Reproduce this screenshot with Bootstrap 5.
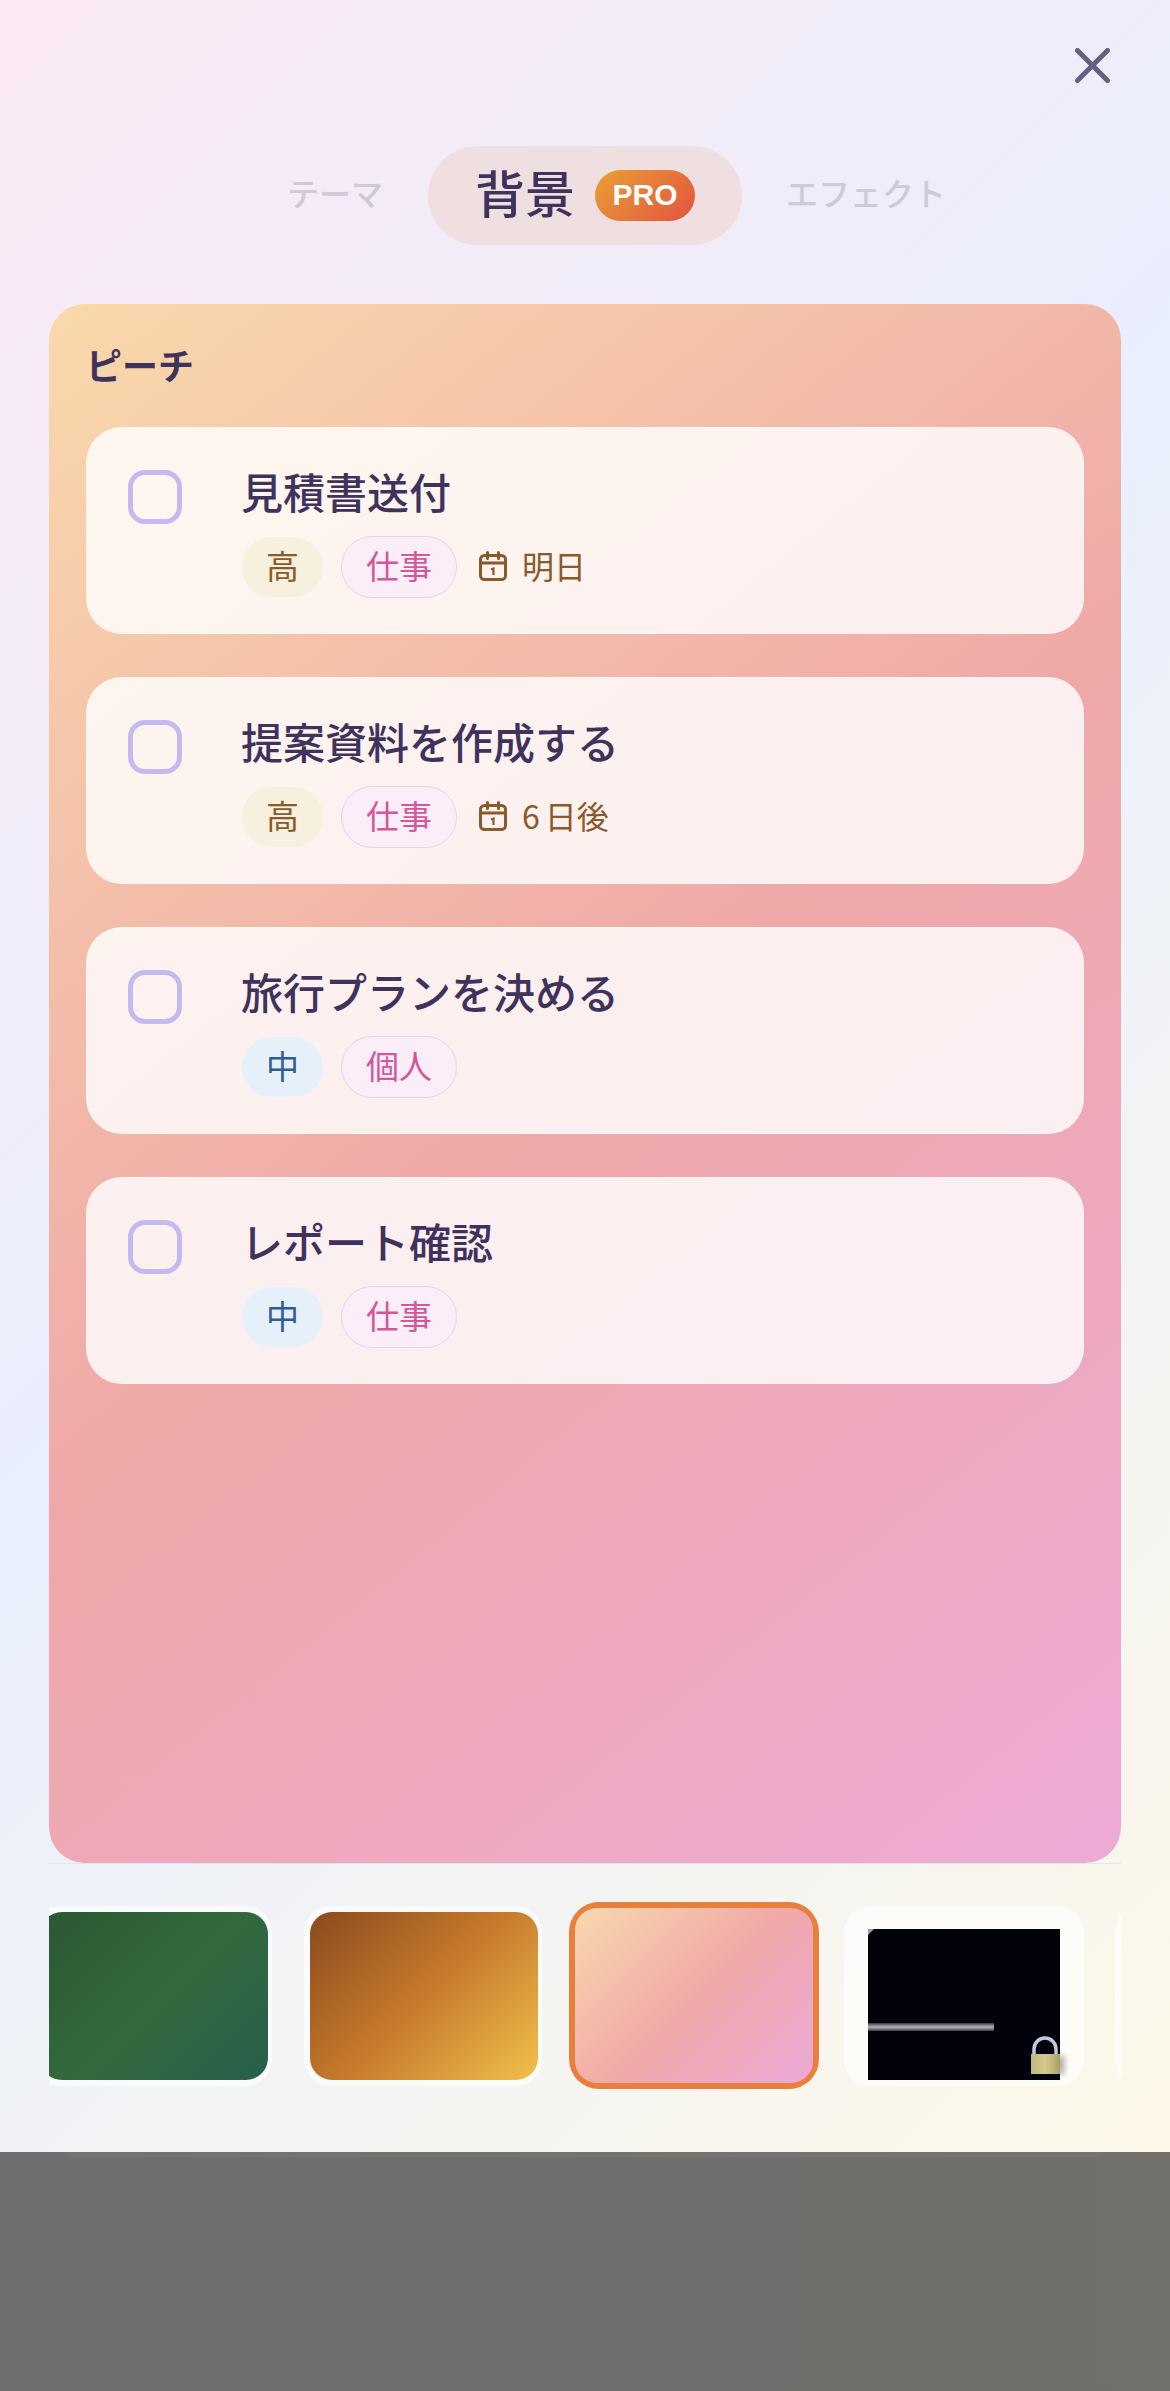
<!DOCTYPE html>
<html lang="ja">
<head>
    <meta charset="UTF-8">
    <meta name="viewport" content="width=device-width, initial-scale=1.0">
    <title>背景</title>
    <link href="https://cdn.jsdelivr.net/npm/bootstrap@5.3.0/dist/css/bootstrap.min.css" rel="stylesheet">
    <style>
        body {
            width: 1170px;
            height: 2391px;
            overflow: hidden;
            font-family: "Noto Sans CJK JP", "Liberation Sans", sans-serif;
            color: #3f325c;
            background: #6f6f6e;
        }
        .sheet {
            height: 2152px;
            background: linear-gradient(135deg, #fbe9f4 0%, #e9effd 47%, #fdf8e8 100%);
        }
        .dim-area {
            height: 239px;
            background: linear-gradient(90deg, #6e6e71, #71706b);
        }
        .dim-edge {
            height: 5px;
            margin: 0 66px;
            border-radius: 0 0 16px 16px;
            background: rgba(255, 255, 255, .03);
        }
        .close-row {
            padding: 48px 60px 0 0;
        }
        .tab-row {
            margin-top: 63px;
            height: 99px;
            padding-left: 287px;
        }
        .tab-off {
            font-size: 32px;
            font-weight: 500;
            color: #cfc9da;
            line-height: 1;
            padding-bottom: 8px;
        }
        .tab-on {
            height: 99px;
            margin: 0 44px 0 45px;
            padding: 0 47px;
            background: #f0dfe0;
        }
        .tab-on-text {
            font-size: 50px;
            font-weight: 500;
            line-height: 1;
            margin-right: 20px;
            padding-bottom: 9px;
        }
        .pro-tag {
            width: 100px;
            height: 51px;
            padding-bottom: 2px;
            font-family: "Liberation Sans", sans-serif;
            font-size: 30px;
            font-weight: 700;
            color: #fff;
            background: linear-gradient(135deg, #e9a036, #e2533f);
        }
        .preview-box {
            height: 1559px;
            margin: 59px 49px 0;
            padding: 33px 37px 0;
            border-radius: 36px;
            background: linear-gradient(141deg, #f9d9ab 0%, #efa8a8 50%, #edaad6 100%);
        }
        .preview-name {
            font-size: 36px;
            font-weight: 700;
            line-height: 54px;
            margin-bottom: 36px;
        }
        .task-list {
            gap: 43px;
        }
        .task-item {
            height: 207px;
            padding: 35px 41px 0;
            border-radius: 36px;
            border: 1px solid rgba(255, 255, 255, .35);
            background: rgba(255, 255, 255, .81);
        }
        .task-check {
            width: 54px;
            height: 54px;
            margin: 7px 60px 0 0;
            border: 5px solid #c5b9f1;
            border-radius: 17px;
        }
        .task-title {
            font-size: 42px;
            font-weight: 500;
            line-height: 60px;
            margin: -2px 0 15px -1px;
        }
        .chip-row {
            gap: 18px;
        }
        .chip {
            font-size: 33px;
            line-height: 1;
            padding: 0 24px 4px;
        }
        .chip-high {
            height: 60px;
            color: #8a5a2b;
            background: #f7f0df;
        }
        .chip-mid {
            height: 60px;
            color: #2d5f94;
            background: #e6f0fb;
        }
        .chip-cat {
            height: 62px;
            color: #d4579a;
            background: #fbeef8;
            border: 1px solid #efcfe6;
        }
        .due-icon {
            margin: -2px 0 0 4px;
        }
        .due-text {
            margin-left: -3px;
            padding-bottom: 4px;
            font-size: 32px;
            line-height: 1;
            color: #8a5a2b;
        }
        .due-num {
            letter-spacing: 5px;
        }
        .rule-line {
            height: 1px;
            margin: 0 49px;
            background: #e6e4ef;
        }
        .thumb-strip {
            margin: 38px 48px 0 49px;
            height: 187px;
            gap: 32px;
        }
        .thumb-wrap {
            width: 238px;
            height: 180px;
            padding: 6px 4px 6px 6px;
            border-radius: 26px;
            background: rgba(255, 255, 255, .62);
        }
        .thumb-wrap:first-child {
            margin-left: -15px;
        }
        .thumb-fill {
            height: 100%;
            border-radius: 22px;
        }
        .fill-green {
            background: linear-gradient(135deg, #2a5733 0%, #336a3d 50%, #285f4c 100%);
        }
        .fill-amber {
            background: linear-gradient(135deg, #8b4a1e 0%, #c67a2c 50%, #f2c04c 100%);
        }
        .fill-peach {
            background: linear-gradient(135deg, #f8d9ae 0%, #f0a8a8 52%, #eba9d8 100%);
        }
        .thumb-picked {
            width: 250px;
            height: 187px;
            margin: 0 -7px 0 -5px;
            padding: 6px;
            border-radius: 30px;
            background: #e97f3d;
        }
        .thumb-locked {
            width: 240px;
            padding: 23px 24px 6px;
            margin-right: -1px;
        }
        .thumb-locked svg {
            display: block;
            overflow: visible;
        }
        .lock-shadow {
            filter: blur(3px);
        }
    </style>
</head>
<body>
    <svg width="0" height="0" class="position-absolute">
        <symbol id="cal-icon" viewBox="0 0 28 30">
            <rect x="1.5" y="4.5" width="25" height="24" rx="4" fill="none" stroke="#8a5a2b" stroke-width="3"/>
            <path d="M1.5 12h25M8.5 1.5v6M19.5 1.5v6" fill="none" stroke="#8a5a2b" stroke-width="3" stroke-linecap="round"/>
            <path d="M12 18.5l2.5-1v6.5" fill="none" stroke="#8a5a2b" stroke-width="2.2"/>
        </symbol>
    </svg>

    <div class="sheet">
        <div class="close-row d-flex justify-content-end">
            <svg width="35" height="35" viewBox="0 0 35 35">
                <path d="M2.5 2.5l30 30M32.5 2.5l-30 30" fill="none" stroke="#665f80" stroke-width="5" stroke-linecap="round"/>
            </svg>
        </div>

        <div class="tab-row d-flex align-items-center">
            <span class="tab-off">テーマ</span>
            <div class="tab-on rounded-pill d-flex align-items-center">
                <span class="tab-on-text">背景</span>
                <span class="pro-tag rounded-pill d-flex align-items-center justify-content-center">PRO</span>
            </div>
            <span class="tab-off">エフェクト</span>
        </div>

        <div class="preview-box">
            <div class="preview-name">ピーチ</div>
            <div class="task-list d-flex flex-column">
                <div class="task-item d-flex align-items-start">
                    <div class="task-check flex-shrink-0"></div>
                    <div>
                        <div class="task-title">見積書送付</div>
                        <div class="chip-row d-flex align-items-center">
                            <span class="chip chip-high rounded-pill d-flex align-items-center">高</span>
                            <span class="chip chip-cat rounded-pill d-flex align-items-center">仕事</span>
                            <svg class="due-icon" width="28" height="30"><use href="#cal-icon"/></svg>
                            <span class="due-text">明日</span>
                        </div>
                    </div>
                </div>
                <div class="task-item d-flex align-items-start">
                    <div class="task-check flex-shrink-0"></div>
                    <div>
                        <div class="task-title">提案資料を作成する</div>
                        <div class="chip-row d-flex align-items-center">
                            <span class="chip chip-high rounded-pill d-flex align-items-center">高</span>
                            <span class="chip chip-cat rounded-pill d-flex align-items-center">仕事</span>
                            <svg class="due-icon" width="28" height="30"><use href="#cal-icon"/></svg>
                            <span class="due-text"><span class="due-num">6</span>日後</span>
                        </div>
                    </div>
                </div>
                <div class="task-item d-flex align-items-start">
                    <div class="task-check flex-shrink-0"></div>
                    <div>
                        <div class="task-title">旅行プランを決める</div>
                        <div class="chip-row d-flex align-items-center">
                            <span class="chip chip-mid rounded-pill d-flex align-items-center">中</span>
                            <span class="chip chip-cat rounded-pill d-flex align-items-center">個人</span>
                        </div>
                    </div>
                </div>
                <div class="task-item d-flex align-items-start">
                    <div class="task-check flex-shrink-0"></div>
                    <div>
                        <div class="task-title">レポート確認</div>
                        <div class="chip-row d-flex align-items-center">
                            <span class="chip chip-mid rounded-pill d-flex align-items-center">中</span>
                            <span class="chip chip-cat rounded-pill d-flex align-items-center">仕事</span>
                        </div>
                    </div>
                </div>
            </div>
        </div>

        <div class="rule-line"></div>

        <div class="thumb-strip d-flex align-items-center overflow-hidden">
            <div class="thumb-wrap flex-shrink-0"><div class="thumb-fill fill-green"></div></div>
            <div class="thumb-wrap flex-shrink-0"><div class="thumb-fill fill-amber"></div></div>
            <div class="thumb-picked flex-shrink-0"><div class="thumb-fill fill-peach"></div></div>
            <div class="thumb-wrap thumb-locked flex-shrink-0">
                <svg width="192" height="151" viewBox="0 0 192 151">
                    <defs>
                        <linearGradient id="line-fade" x1="0" y1="0" x2="0" y2="1">
                            <stop offset="0" stop-color="#3a3a44"/>
                            <stop offset=".5" stop-color="#b4b4ba"/>
                            <stop offset="1" stop-color="#3a3a44"/>
                        </linearGradient>
                        <linearGradient id="lock-body" x1="0" y1="0" x2="1" y2="0">
                            <stop offset="0" stop-color="#c2b87c"/>
                            <stop offset=".5" stop-color="#d3ca92"/>
                            <stop offset="1" stop-color="#a99f63"/>
                        </linearGradient>
                    </defs>
                    <rect width="192" height="151" fill="#02020c"/>
                    <path d="M0 0h6L0 6z" fill="#9a9aa0"/>
                    <rect y="94" width="126" height="8" fill="url(#line-fade)"/>
                    <rect class="lock-shadow" x="188" y="127" width="8" height="18" fill="#000" opacity=".35"/>
                    <path d="M166 125v-5a11 11 0 0 1 22 0v5" fill="none" stroke="#c3cbdb" stroke-width="3.5"/>
                    <rect x="163" y="125" width="29" height="20" fill="url(#lock-body)"/>
                </svg>
            </div>
            <div class="thumb-wrap flex-shrink-0"></div>
        </div>
    </div>

    <div class="dim-area">
        <div class="dim-edge"></div>
    </div>

    <script src="https://cdn.jsdelivr.net/npm/bootstrap@5.3.0/dist/js/bootstrap.bundle.min.js"></script>
</body>
</html>
